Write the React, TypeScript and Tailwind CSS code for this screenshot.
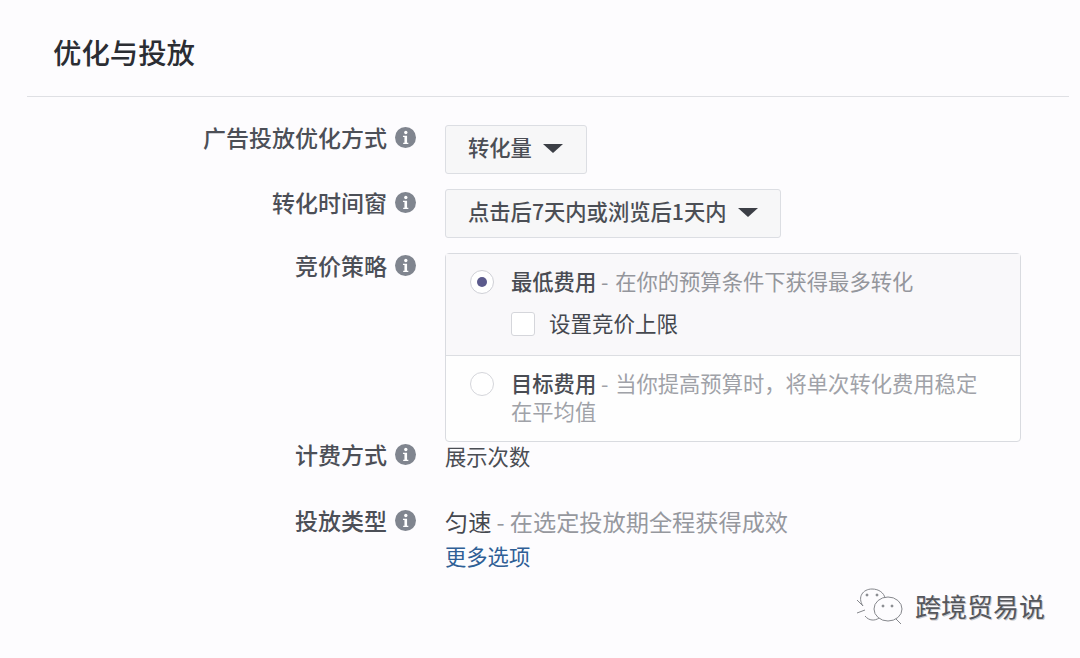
import { useState } from "react";

const font = "font-['Noto_Sans_CJK_SC','Liberation_Sans',sans-serif]";

function InfoIcon() {
  return (
    <svg viewBox="0 0 20 20" className="h-[21px] w-[21px] shrink-0" aria-hidden="true">
      <circle cx="10" cy="10" r="10" fill="#80858f" />
      <circle cx="10.3" cy="5.2" r="1.6" fill="#fff" />
      <path d="M7.6 8.3h3.9v6.6h1.2v1.3H7.8v-1.3h1.2V9.6H7.6z" fill="#fff" />
    </svg>
  );
}

function Caret() {
  return <span className="h-0 w-0 border-x-[10px] border-t-[9px] border-x-transparent border-t-[#3c3f46]" />;
}

function Label({ text, className = "" }: { text: string; className?: string }) {
  return (
    <div className={`flex h-[30px] w-[416px] shrink-0 items-center justify-end gap-[8px] ${className}`}>
      <span className="text-[23px] leading-[30px] font-medium text-[#4c4f57]">{text}</span>
      <InfoIcon />
    </div>
  );
}

function Dropdown({ text, className }: { text: string; className: string }) {
  return (
    <button className={`flex h-[49px] items-center rounded-[3px] border border-[#dcdee3] bg-[#f7f7f8] pb-[5px] pl-[22px] text-[21.3px] font-medium text-[#4b4e55] ${className}`}>
      <span>{text}</span>
      <span className="ml-[11px] flex pt-[3px]"><Caret /></span>
    </button>
  );
}

export default function App() {
  const [cap, setCap] = useState(false);
  return (
    <div className={`h-[658px] w-[1080px] overflow-hidden bg-[#fdfcfe] ${font}`}>
      <header className="ml-[27px] mr-[11px] h-[97px] border-b border-[#dfe0e4] pl-[26px] pt-[30px]">
        <h1 className="text-[28.4px] leading-[44px] font-medium text-[#2b2d33]">优化与投放</h1>
      </header>

      <section>
        <div className="mt-[28px] flex">
          <Label text="广告投放优化方式" className="-mt-[3px]" />
          <Dropdown text="转化量" className="ml-[29px] w-[142px]" />
        </div>

        <div className="mt-[15px] flex">
          <Label text="转化时间窗" className="-mt-[2px]" />
          <Dropdown text="点击后7天内或浏览后1天内" className="ml-[29px] w-[336px]" />
        </div>

        <div className="mt-[15px] flex">
          <Label text="竞价策略" className="-mt-[3px]" />
          <div className="ml-[29px] h-[189px] w-[576px] rounded-[4px] border border-[#d9dbe0] bg-[#fefefe]">
            <div className="h-[102px] border-b border-[#dcdee2] bg-[#f9f8fa] pt-[14px]">
              <div className="flex items-center pl-[24px]">
                <span className="flex h-[24px] w-[24px] items-center justify-center rounded-full border border-[#cfd0d6] bg-white">
                  <span className="h-[10px] w-[10px] rounded-full bg-[#5b5a8c]" />
                </span>
                <p className="ml-[17px] -mt-[2px] text-[21.3px] leading-[30px] text-[#94969c]">
                  <span className="font-medium text-[#494c53]">最低费用</span> <span className="mr-[2px]">-</span> 在你的预算条件下获得最多转化
                </p>
              </div>
              <label className="mt-[13px] flex items-center pl-[65px]">
                <input type="checkbox" checked={cap} onChange={(e) => setCap(e.target.checked)} className="h-[24px] w-[24px] appearance-none rounded-[3px] border border-[#d5d6db] bg-white" />
                <span className="ml-[14px] -mt-[1px] text-[21.5px] leading-[30px] text-[#45484f]">设置竞价上限</span>
              </label>
            </div>
            <div className="flex pt-[13px] pl-[24px]">
              <span className="mt-[3px] h-[24px] w-[24px] shrink-0 rounded-full border border-[#d5d6db] bg-white" />
              <p className="ml-[17px] w-[474px] text-[21.3px] leading-[28px] text-[#a0a2a8]">
                <span className="font-medium text-[#494c53]">目标费用</span> <span className="mr-[2px]">-</span> 当你提高预算时，将单次转化费用稳定在平均值
              </p>
            </div>
          </div>
        </div>

        <div className="flex">
          <Label text="计费方式" className="-mt-[3px]" />
          <span className="ml-[29px] -mt-[1px] text-[21.3px] leading-[30px] text-[#4a4d54]">展示次数</span>
        </div>

        <div className="mt-[35px] flex">
          <Label text="投放类型" className="-mt-[1px]" />
          <div className="ml-[29px]">
            <p className="text-[23.2px] leading-[30px] text-[#96989e]">
              <span className="text-[#45484f]">匀速</span> - 在选定投放期全程获得成效
            </p>
            <a className="mt-[5px] block text-[21.3px] leading-[30px] text-[#2f5f96]">更多选项</a>
          </div>
        </div>
      </section>

      <div className="mt-[15px] flex items-center justify-end pr-[35px]">
        <svg viewBox="0 0 52 40" className="h-[40px] w-[52px]" fill="none" stroke="#85878c" strokeWidth="1" aria-hidden="true">
          <path d="M9 20C3 11 9 3 18 3c7 0 12 4 13 9" />
          <path d="M9 20l-6-6M11 24l-8 3" />
          <ellipse cx="34" cy="23" rx="14" ry="12" />
          <path d="M25 32c-4 3-10 3-14-2M42 33l5 5" />
          <circle cx="13" cy="9" r="1" fill="#85878c" />
          <circle cx="23" cy="9" r="1" fill="#85878c" />
          <circle cx="29" cy="20" r="1" fill="#85878c" />
          <circle cx="38" cy="20" r="1" fill="#85878c" />
        </svg>
        <span className="ml-[9px] text-[26px] leading-[36px] text-[#55575c] [text-shadow:1px_1px_0_#c9c9cc]">跨境贸易说</span>
      </div>
    </div>
  );
}
